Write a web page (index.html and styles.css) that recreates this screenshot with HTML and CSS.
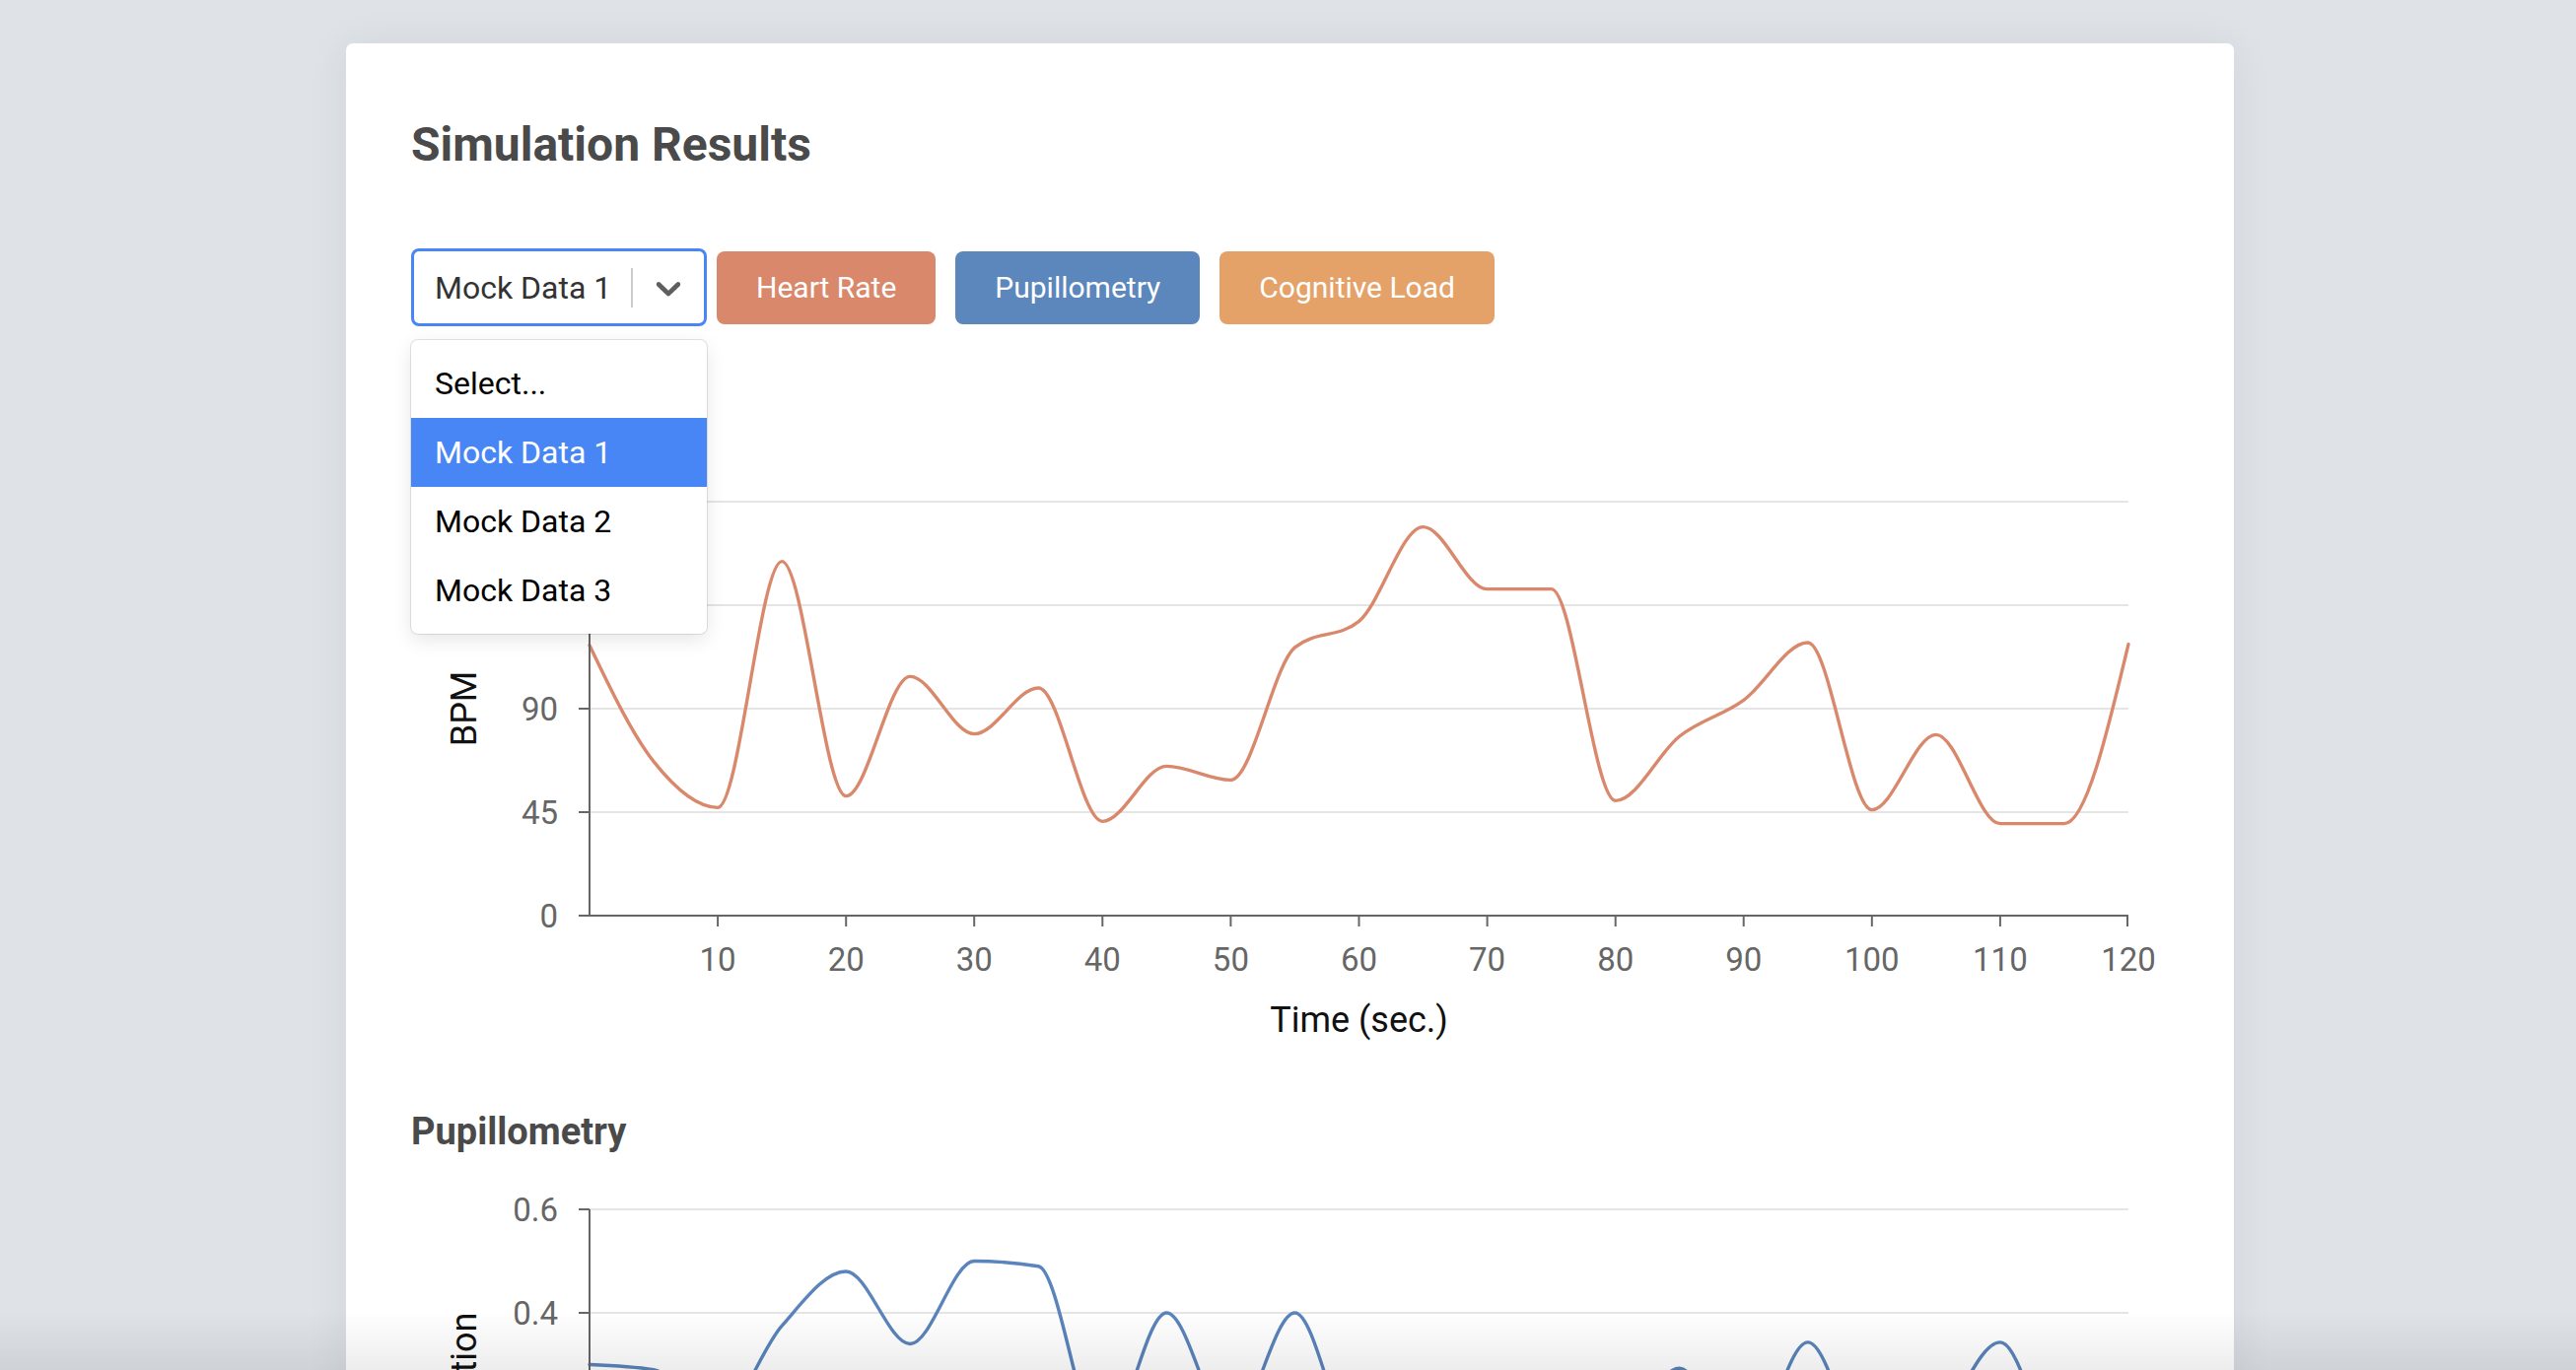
FILE: index.html
```html
<!DOCTYPE html>
<html lang="en">
<head>
<meta charset="utf-8">
<title>Simulation Results</title>
<link rel="stylesheet" href="styles.css">
</head>
<body>
<main class="card">
  <h1 class="title">Simulation Results</h1>

  <div class="controls">
    <div class="select">
      <div class="select-control">
        <div class="select-value">Mock Data 1</div>
        <span class="select-sep"></span>
        <div class="select-indicator">
          <svg class="chevron" viewBox="0 0 20 20" aria-hidden="true"><path d="M4.516 7.548c0.436-0.446 1.043-0.481 1.576 0l3.908 3.747 3.908-3.747c0.533-0.481 1.141-0.446 1.574 0 0.436 0.445 0.408 1.197 0 1.615-0.406 0.418-4.695 4.502-4.695 4.502-0.217 0.223-0.502 0.335-0.787 0.335s-0.57-0.112-0.789-0.335c0 0-4.287-4.084-4.695-4.502s-0.436-1.17 0-1.615z"/></svg>
        </div>
      </div>
      <div class="select-menu">
        <div class="option">Select...</div>
        <div class="option selected">Mock Data 1</div>
        <div class="option">Mock Data 2</div>
        <div class="option">Mock Data 3</div>
      </div>
    </div>
    <button class="btn btn-hr" type="button">Heart Rate</button>
    <button class="btn btn-pupil" type="button">Pupillometry</button>
    <button class="btn btn-cog" type="button">Cognitive Load</button>
  </div>

  <section class="chart">
    <h2 class="chart-title">Heart Rate</h2>
    <svg class="chart-svg" width="1780" height="580" viewBox="0 0 1780 580">
      <g class="grid">
        <line x1="181" y1="40" x2="1742" y2="40"/>
        <line x1="181" y1="145" x2="1742" y2="145"/>
        <line x1="181" y1="250" x2="1742" y2="250"/>
        <line x1="181" y1="355" x2="1742" y2="355"/>
      </g>
      <path id="hr-line" class="line line-hr" d=""/>
      <g class="axis">
        <line x1="181" y1="40" x2="181" y2="461"/>
        <line x1="170" y1="460" x2="1742" y2="460"/>
        <line x1="170" y1="40" x2="181" y2="40"/>
        <line x1="170" y1="145" x2="181" y2="145"/>
        <line x1="170" y1="250" x2="181" y2="250"/>
        <line x1="170" y1="355" x2="181" y2="355"/>
        <line x1="311.1" y1="460" x2="311.1" y2="471"/>
        <line x1="441.2" y1="460" x2="441.2" y2="471"/>
        <line x1="571.2" y1="460" x2="571.2" y2="471"/>
        <line x1="701.3" y1="460" x2="701.3" y2="471"/>
        <line x1="831.4" y1="460" x2="831.4" y2="471"/>
        <line x1="961.5" y1="460" x2="961.5" y2="471"/>
        <line x1="1091.6" y1="460" x2="1091.6" y2="471"/>
        <line x1="1221.7" y1="460" x2="1221.7" y2="471"/>
        <line x1="1351.7" y1="460" x2="1351.7" y2="471"/>
        <line x1="1481.8" y1="460" x2="1481.8" y2="471"/>
        <line x1="1611.9" y1="460" x2="1611.9" y2="471"/>
        <line x1="1741" y1="460" x2="1741" y2="471"/>
      </g>
      <g class="ytick-labels">
        <text x="149" y="52">180</text>
        <text x="149" y="157">135</text>
        <text x="149" y="262">90</text>
        <text x="149" y="367">45</text>
        <text x="149" y="472">0</text>
      </g>
      <g class="xtick-labels">
        <text x="311.1" y="516">10</text>
        <text x="441.2" y="516">20</text>
        <text x="571.2" y="516">30</text>
        <text x="701.3" y="516">40</text>
        <text x="831.4" y="516">50</text>
        <text x="961.5" y="516">60</text>
        <text x="1091.6" y="516">70</text>
        <text x="1221.7" y="516">80</text>
        <text x="1351.7" y="516">90</text>
        <text x="1481.8" y="516">100</text>
        <text x="1611.9" y="516">110</text>
        <text x="1742" y="516">120</text>
      </g>
      <text class="axis-title" transform="translate(66,250) rotate(-90)">BPM</text>
      <text class="axis-title" x="961.5" y="578">Time (sec.)</text>
    </svg>
  </section>

  <section class="chart">
    <h2 class="chart-title">Pupillometry</h2>
    <svg class="chart-svg" width="1780" height="580" viewBox="0 0 1780 580">
      <g class="grid">
        <line x1="181" y1="40" x2="1742" y2="40"/>
        <line x1="181" y1="145" x2="1742" y2="145"/>
        <line x1="181" y1="250" x2="1742" y2="250"/>
        <line x1="181" y1="355" x2="1742" y2="355"/>
      </g>
      <path id="pupil-line" class="line line-pupil" d=""/>
      <g class="axis">
        <line x1="181" y1="40" x2="181" y2="461"/>
        <line x1="170" y1="460" x2="1742" y2="460"/>
        <line x1="170" y1="40" x2="181" y2="40"/>
        <line x1="170" y1="145" x2="181" y2="145"/>
        <line x1="170" y1="250" x2="181" y2="250"/>
        <line x1="170" y1="355" x2="181" y2="355"/>
        <line x1="311.1" y1="460" x2="311.1" y2="471"/>
        <line x1="441.2" y1="460" x2="441.2" y2="471"/>
        <line x1="571.2" y1="460" x2="571.2" y2="471"/>
        <line x1="701.3" y1="460" x2="701.3" y2="471"/>
        <line x1="831.4" y1="460" x2="831.4" y2="471"/>
        <line x1="961.5" y1="460" x2="961.5" y2="471"/>
        <line x1="1091.6" y1="460" x2="1091.6" y2="471"/>
        <line x1="1221.7" y1="460" x2="1221.7" y2="471"/>
        <line x1="1351.7" y1="460" x2="1351.7" y2="471"/>
        <line x1="1481.8" y1="460" x2="1481.8" y2="471"/>
        <line x1="1611.9" y1="460" x2="1611.9" y2="471"/>
        <line x1="1741" y1="460" x2="1741" y2="471"/>
      </g>
      <g class="ytick-labels">
        <text x="149" y="52">0.6</text>
        <text x="149" y="157">0.4</text>
        <text x="149" y="262">0.2</text>
        <text x="149" y="367">0.0</text>
      </g>
      <g class="xtick-labels">
        <text x="311.1" y="516">10</text>
        <text x="441.2" y="516">20</text>
        <text x="571.2" y="516">30</text>
        <text x="701.3" y="516">40</text>
        <text x="831.4" y="516">50</text>
        <text x="961.5" y="516">60</text>
        <text x="1091.6" y="516">70</text>
        <text x="1221.7" y="516">80</text>
        <text x="1351.7" y="516">90</text>
        <text x="1481.8" y="516">100</text>
        <text x="1611.9" y="516">110</text>
        <text x="1742" y="516">120</text>
      </g>
      <text class="axis-title" transform="translate(66,250) rotate(-90)">Pupil Dilation</text>
      <text class="axis-title" x="961.5" y="578">Time (sec.)</text>
    </svg>
  </section>
</main>
<div class="fade"></div>
<script src="script.js"></script>
</body>
</html>
```

FILE: styles.css
```css
* {
  box-sizing: border-box;
}

html,
body {
  margin: 0;
  padding: 0;
  overflow: hidden;
}

body {
  background: #dfe3e8;
  font-family: Roboto, "Noto Sans", "Liberation Sans", sans-serif;
  min-height: 100vh;
}

.card {
  width: 1915px;
  margin: 44px 0 0 351px;
  padding: 75px 66px 80px;
  background: #ffffff;
  border-radius: 7px;
  box-shadow: 0 2px 40px rgba(40, 50, 70, 0.08);
}

.title {
  margin: 0 0 77px;
  font-size: 48px;
  line-height: 56px;
  font-weight: 700;
  color: #4a4a4a;
}

.controls {
  display: flex;
  align-items: center;
  height: 79px;
}

.select {
  position: relative;
  flex: none;
  width: 300px;
}

.select-control {
  display: flex;
  align-items: center;
  height: 79px;
  border: 3px solid #4886f6;
  border-radius: 8px;
  background: #ffffff;
}

.select-value {
  flex: 1;
  padding-left: 21px;
  font-size: 32px;
  line-height: 38px;
  color: #333333;
  white-space: nowrap;
}

.select-sep {
  flex: none;
  width: 2px;
  height: 40px;
  background: #cccccc;
}

.select-indicator {
  flex: none;
  width: 72px;
  display: flex;
  align-items: center;
  justify-content: center;
}

.chevron {
  width: 42px;
  height: 42px;
  fill: #5f5f5f;
}

.select-menu {
  position: absolute;
  top: calc(100% + 14px);
  left: 0;
  width: 100%;
  padding: 9px 0;
  background: #ffffff;
  border-radius: 7px;
  box-shadow: 0 0 0 1px rgba(0, 0, 0, 0.1), 0 6px 20px rgba(0, 0, 0, 0.1);
  z-index: 10;
}

.option {
  height: 70px;
  line-height: 70px;
  padding-left: 24px;
  font-size: 32px;
  color: #000000;
  white-space: nowrap;
}

.option.selected {
  background: #4886f6;
  color: #ffffff;
}

.btn {
  flex: none;
  height: 74px;
  margin: 0 10px;
  padding: 0 40px;
  border: 0;
  border-radius: 8px;
  font-family: Roboto, "Noto Sans", "Liberation Sans", sans-serif;
  font-size: 30px;
  font-weight: 400;
  color: #ffffff;
}

.btn-hr {
  background: #d9886b;
}

.btn-pupil {
  background: #5b87bc;
}

.btn-cog {
  background: #e4a269;
}

.chart-title {
  margin: 77px 0 17px;
  font-size: 38px;
  line-height: 44px;
  font-weight: 700;
  color: #4a4a4a;
}

.chart-svg {
  display: block;
  overflow: visible;
}

.grid line {
  stroke: #e5e5e5;
  stroke-width: 2;
}

.axis line {
  stroke: #666666;
  stroke-width: 2;
}

.ytick-labels text,
.xtick-labels text {
  font-family: Roboto, "Noto Sans", "Liberation Sans", sans-serif;
  font-size: 33px;
  fill: #666666;
}

.ytick-labels text {
  text-anchor: end;
}

.xtick-labels text {
  text-anchor: middle;
}

.axis-title {
  font-family: Roboto, "Noto Sans", "Liberation Sans", sans-serif;
  font-size: 36px;
  fill: #111111;
  text-anchor: middle;
}

.line {
  fill: none;
  stroke-width: 3.4;
  stroke-linejoin: round;
  stroke-linecap: round;
}

.line-hr {
  stroke: #d9886b;
}

.line-pupil {
  stroke: #5a84bb;
}

.fade {
  position: fixed;
  left: 0;
  right: 0;
  bottom: 0;
  height: 60px;
  background: linear-gradient(to bottom, rgba(0, 0, 0, 0), rgba(0, 0, 0, 0.07));
  pointer-events: none;
}
```

FILE: script.js
```js
(function () {
  var heartRate = [117.5, 67, 47, 154, 52, 104, 79, 99, 41, 65, 59, 116.6, 128,
    169, 142, 142, 50, 78, 93.7, 118.7, 46, 78.7, 40, 40, 118];
  var pupil = [0.30, 0.29, 0.20, 0.375, 0.48, 0.34, 0.50, 0.49, 0.15, 0.40, 0.18,
    0.40, 0.14, 0.20, 0.16, 0.22, 0.18, 0.293, 0.12, 0.343, 0.12, 0.18, 0.343, 0.12, 0.2];

  function xScale(t) { return 181 + t * (1742 - 181) / 120; }

  function sign(v) { return v < 0 ? -1 : 1; }

  function monotonePath(pts) {
    var n = pts.length, i;
    var s = [], t = new Array(n);
    for (i = 0; i < n - 1; i++) {
      s.push((pts[i + 1][1] - pts[i][1]) / (pts[i + 1][0] - pts[i][0]));
    }
    for (i = 1; i < n - 1; i++) {
      var h0 = pts[i][0] - pts[i - 1][0];
      var h1 = pts[i + 1][0] - pts[i][0];
      var s0 = s[i - 1], s1 = s[i];
      var p = (s0 * h1 + s1 * h0) / (h0 + h1);
      t[i] = (sign(s0) + sign(s1)) * Math.min(Math.abs(s0), Math.abs(s1), 0.5 * Math.abs(p)) || 0;
    }
    t[0] = (3 * s[0] - t[1]) / 2;
    t[n - 1] = (3 * s[n - 2] - t[n - 2]) / 2;
    var d = 'M' + pts[0][0].toFixed(2) + ',' + pts[0][1].toFixed(2);
    for (i = 0; i < n - 1; i++) {
      var dx = (pts[i + 1][0] - pts[i][0]) / 3;
      d += 'C' + (pts[i][0] + dx).toFixed(2) + ',' + (pts[i][1] + dx * t[i]).toFixed(2) + ' ' +
        (pts[i + 1][0] - dx).toFixed(2) + ',' + (pts[i + 1][1] - dx * t[i + 1]).toFixed(2) + ' ' +
        pts[i + 1][0].toFixed(2) + ',' + pts[i + 1][1].toFixed(2);
    }
    return d;
  }

  var hrPts = heartRate.map(function (v, i) { return [xScale(i * 5), 460 - v * 420 / 180]; });
  var puPts = pupil.map(function (v, i) { return [xScale(i * 5), 40 + (0.6 - v) * 525]; });

  document.getElementById('hr-line').setAttribute('d', monotonePath(hrPts));
  document.getElementById('pupil-line').setAttribute('d', monotonePath(puPts));
})();
```
